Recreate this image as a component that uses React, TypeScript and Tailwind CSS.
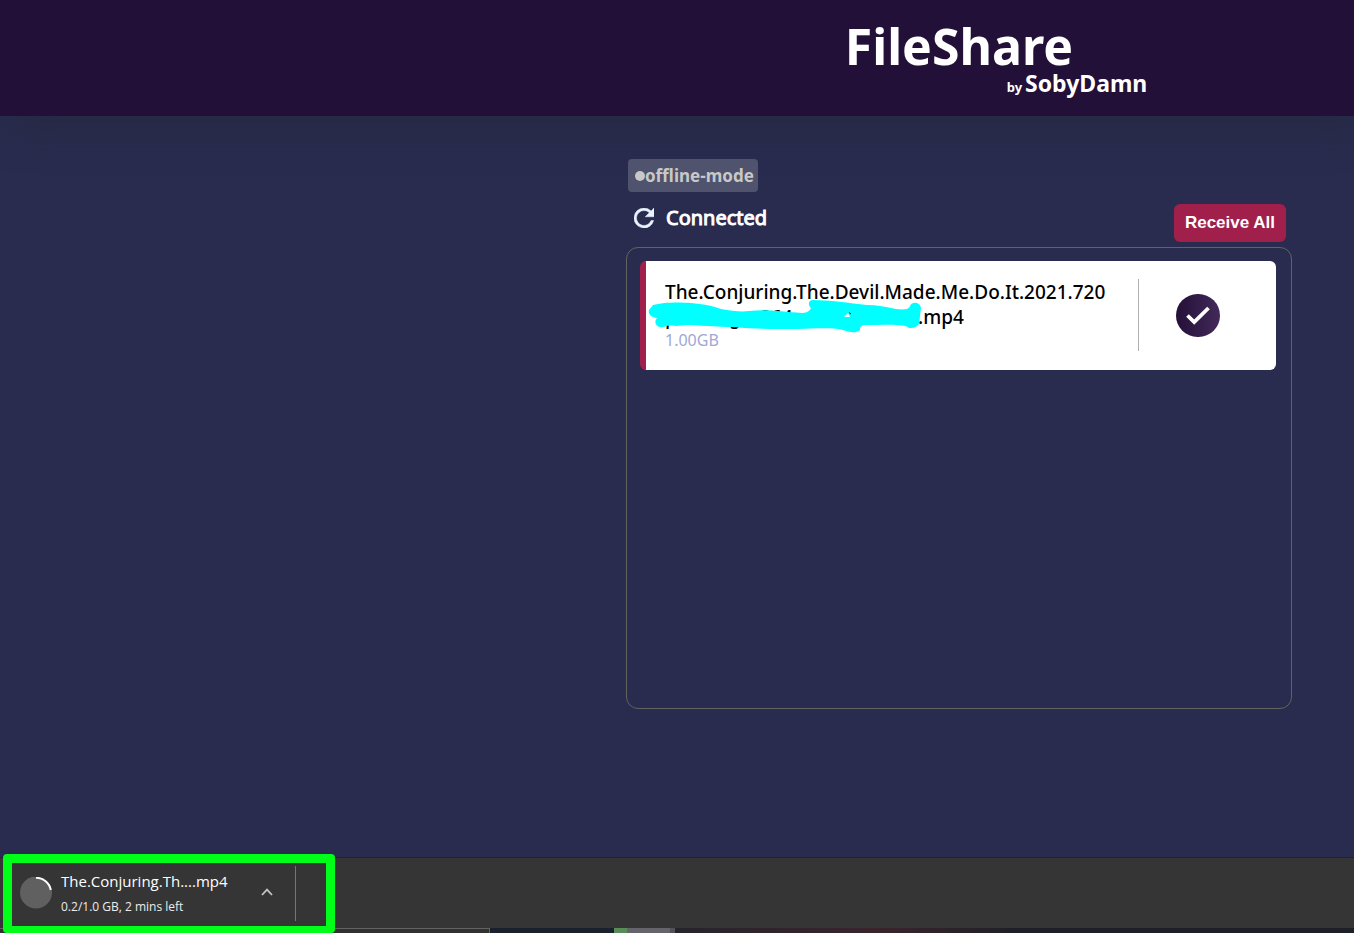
import { useState } from "react";

function RefreshIcon() {
  return (
    <svg viewBox="0 0 20 20" className="size-5" aria-hidden="true">
      <path
        d="M17.07 2.93A9.96 9.96 0 0 0 10 0a10 10 0 1 0 9.66 12.5h-2.6A7.5 7.5 0 1 1 10 2.5c2.07 0 3.92.86 5.27 2.23L11.25 8.75H20V0z"
        fill="#eaf4ff"
        stroke="#eaf4ff"
        strokeWidth="0.5"
      />
    </svg>
  );
}

function CheckIcon() {
  return (
    <svg viewBox="0 0 24 19" className="h-[19px] w-6" aria-hidden="true">
      <path d="M1.5 9.5 8.2 16 22.5 2" fill="none" stroke="#fff" strokeWidth="3.8" />
    </svg>
  );
}

function Scribble() {
  return (
    <svg
      viewBox="0 0 274 36"
      className="absolute -top-1 -left-[17px] h-9 w-[274px] overflow-visible"
      aria-hidden="true"
    >
      <path
        fill="#00ffff"
        d="M5 4C15 1 32 1 43 2C54 3 66 5 73 8C84 10 93 11 101 10C120 8 134 11 154 12C160 12 162 9 163 7C159 3 161 -1 165 -1C180 -1 202 2 219 4C229 4 238 6 248 8C258 9 261 8 262 5C264 0 272 1 273 7C272 12 272 18 271 23C268 28 260 28 258 25C246 23 230 24 216 24C212 25 212 27 212 29C208 33 200 31 195 29C180 26 166 28 149 28C126 28 106 28 86 26C68 26 50 24 38 24L28 25C22 23 19 25 15 26C9 27 5 22 9 17C3 16 0 13 1 9Z"
      />
      <path d="M196 16 200 12 202 16Z" fill="#fff" />
      <path d="M201 11.5 203 13" stroke="#222" />
    </svg>
  );
}

function FileCard() {
  const [received] = useState(true);
  return (
    <li className="flex items-start rounded-md border-l-[6px] border-[#a0204b] bg-white pt-[18px] pb-[19px] pl-[19px]">
      <div className="flex h-[72px] min-w-0 flex-1 flex-col pt-px">
        <div className="max-w-[440px] text-[19px] leading-[25px] font-medium text-black">
          The.Conjuring.The.Devil.Made.Me.Do.It.2021.720
          <div className="relative flex">
            <span className="w-16">p</span>
            <span className="w-[31px]">g</span>
            <span className="w-[158px]">264</span>
            <span>.mp4</span>
            <Scribble />
          </div>
        </div>
        <p className="text-base leading-[21px] text-[#9fa8d5]">1.00GB</p>
      </div>
      <div className="flex h-[72px] w-[138px] items-center border-l border-[#b0b0b0] pl-[37px]">
        <button
          type="button"
          aria-label="File received"
          aria-pressed={received}
          className="flex h-[43px] w-11 items-center justify-center rounded-full bg-linear-to-r from-[#241039] to-[#432959]"
        >
          <CheckIcon />
        </button>
      </div>
    </li>
  );
}

function DownloadBar() {
  return (
    <footer className="flex h-[76px] flex-col bg-[#353535]">
      <div className="flex min-h-0 flex-1 items-stretch border-t border-[#242424]">
        <div className="relative z-10 -mt-1 -mb-[5px] ml-[3px] flex w-[332px] shrink-0 items-center rounded border-[9px] border-b-[7px] border-[#00ff18] bg-[#353535] pb-0.5 pl-2">
          <svg viewBox="0 0 34 34" className="size-[34px] shrink-0" aria-hidden="true">
            <circle cx="16" cy="15.5" r="16" fill="#606060" />
            <path d="M16 0.8A15 15 0 0 1 30.8 13" fill="none" stroke="#fff" strokeWidth="2" />
          </svg>
          <div className="ml-[7px] flex w-[196px] flex-col gap-0.5 font-['Open_Sans',sans-serif]">
            <span className="text-[15px] leading-6 text-white">The.Conjuring.Th....mp4</span>
            <span className="text-xs leading-6 text-[#ececec]">0.2/1.0 GB, 2 mins left</span>
          </div>
          <button type="button" aria-label="Download options" className="px-1 pb-1">
            <svg viewBox="0 0 12 8" className="h-2 w-3" aria-hidden="true">
              <path d="M1 7 6 1.6 11 7" fill="none" stroke="#c4c4c4" strokeWidth="1.8" />
            </svg>
          </button>
          <span className="ml-[18px] h-[55px] w-px bg-[#757575]" />
        </div>
      </div>
      <div className="flex h-[5px]">
        <span className="w-[490px] border-t border-r border-[#626262] bg-[#303230]" />
        <span className="w-[124px] bg-[#1b212c]" />
        <span className="w-[13px] bg-[#5a8c5a]" />
        <span className="w-[43px] bg-[#65646b]" />
        <span className="w-[5px] bg-[#535259]" />
        <span className="flex-1 bg-linear-to-r from-[#26242c] from-0% via-[#3a242c] via-30% to-[#1e2027] to-50%" />
      </div>
    </footer>
  );
}

export default function App() {
  return (
    <div className="flex min-h-screen flex-col bg-[#292c4e] font-['Noto_Sans',sans-serif]">
      <header className="grid h-[116px] grid-cols-[626fr_666fr_62fr] bg-[#221038] shadow-[10px_10px_40px_rgba(35,40,60,0.7)]">
        <div className="col-start-2 flex flex-col items-center pt-[21px] font-bold text-white">
          <h1 className="text-[50px] leading-[50px]">FileShare</h1>
          <p className="ml-[236px] flex items-baseline gap-[3px] text-[23px] leading-6">
            <span className="text-[13px]">by</span>
            <span>SobyDamn</span>
          </p>
        </div>
      </header>

      <main className="grid flex-1 grid-cols-[626fr_666fr_62fr] content-start pt-[43px]">
        <section className="col-start-2">
          <div className="ml-0.5 flex h-[33px] w-fit items-center rounded bg-[#50536d] px-1 text-[17px] font-bold text-[#c8c8c8]">
            <span className="ml-[3px] size-[10px] rounded-full bg-[#c8c8c8]" />
            offline-mode
          </div>
          <div className="mt-3 flex h-[43px] items-start justify-between pr-1.5 pl-2">
            <div className="flex h-7 items-center gap-3">
              <button type="button" aria-label="Refresh">
                <RefreshIcon />
              </button>
              <h2 className="text-xl leading-7 font-normal text-white [-webkit-text-stroke:1px_white]">
                Connected
              </h2>
            </div>
            <button
              type="button"
              className="h-[38px] rounded-md bg-[#a0204b] px-[11px] font-['Liberation_Sans',sans-serif] text-[17px] font-bold text-white"
            >
              Receive All
            </button>
          </div>
          <ul className="min-h-[462px] rounded-xl border border-[#62635f] py-[13px] pr-[15px] pl-[13px]">
            <FileCard />
          </ul>
        </section>
      </main>

      <DownloadBar />
    </div>
  );
}
